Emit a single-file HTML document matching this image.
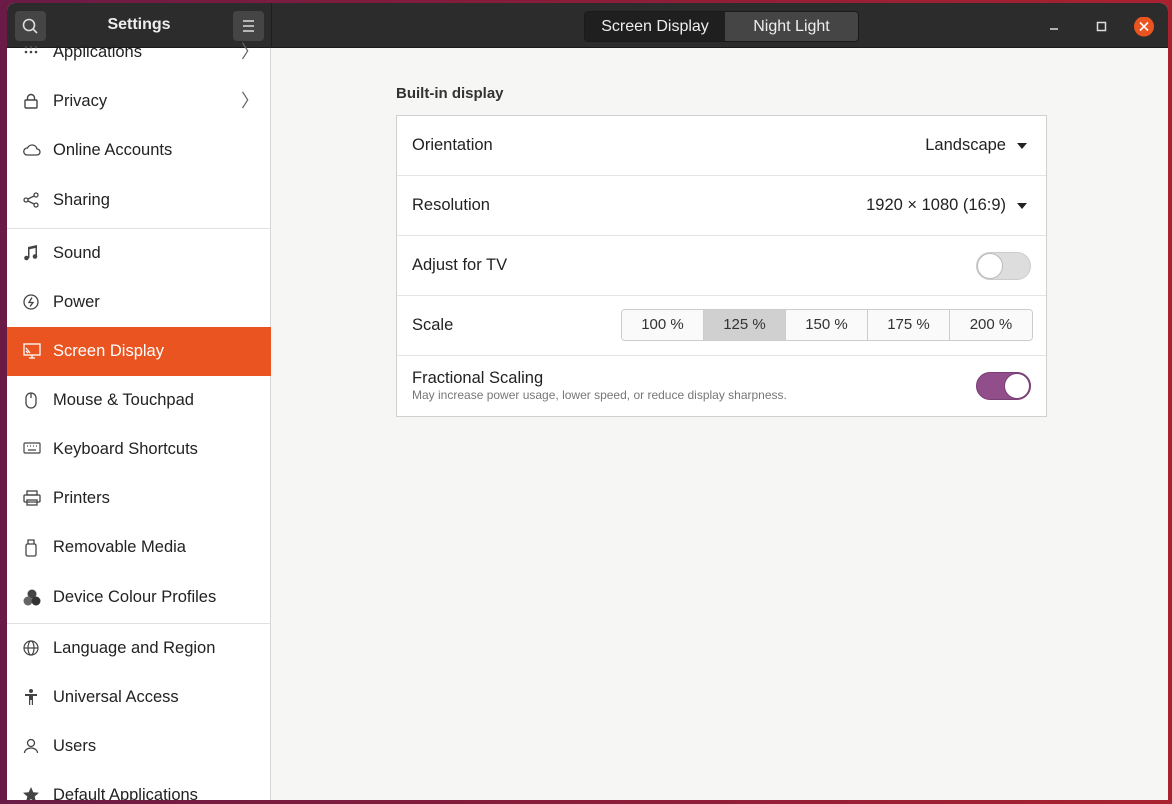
<!DOCTYPE html>
<html><head><style>
*{margin:0;padding:0;box-sizing:border-box}
body{width:1172px;height:804px;overflow:hidden;background:linear-gradient(90deg,#6a1b45,#8a1d3a 50%,#a8222f);font-family:"Liberation Sans",sans-serif;position:relative}
.win{position:absolute;left:7px;top:3px;width:1161px;height:797px;background:#f6f6f5;border-radius:8px 8px 0 0;overflow:hidden}
.hdr{position:absolute;left:0;top:0;width:100%;height:45px;background:#2c2c2c;border-bottom:1px solid #1a1a1a}
.hdr .sep{position:absolute;left:264px;top:0;width:1px;height:45px;background:#1e1e1e}
.btn{position:absolute;top:8px;width:31px;height:30px;background:#454545;border-radius:4px}
.title{position:absolute;left:0;width:264px;top:13px;text-align:center;color:#eee;font-weight:bold;font-size:16px}
.tabs{position:absolute;left:577px;top:8px;height:31px;display:flex;border:1px solid #1a1a1a;border-radius:4px;overflow:hidden}
.tabs div{color:#eee;font-size:16px;line-height:29px;text-align:center}
.side{position:absolute;left:0;top:45px;width:264px;height:752px;background:#fff;border-right:1px solid #d6d6d6}
.it{position:absolute;left:0;width:264px;height:49px;font-size:16.5px;color:#222;line-height:49px;padding-left:46px}
.it svg{position:absolute;left:16px;top:16px}
.it.sel{background:#e95420;color:#fff}
.hr{position:absolute;left:0;width:264px;height:1px;background:#e0e0e0}
.chev{position:absolute;right:12px;top:0;color:#666;font-size:18px}
.h{position:absolute;left:389px;top:82px;font-weight:bold;font-size:15px;color:#333}
.box{position:absolute;left:389px;top:112px;width:651px;height:302px;background:#fff;border:1px solid #d0d0d0}
.row{position:absolute;left:0;width:649px;height:60px;border-bottom:1px solid #e4e4e4;font-size:16.5px;color:#222}
.row .l{position:absolute;left:15px;top:20px}
.row .r{position:absolute;right:40px;top:20px}
.tri{position:absolute;right:19px;top:27px;width:0;height:0;border-left:5px solid transparent;border-right:5px solid transparent;border-top:6px solid #222}
.sw{position:absolute;right:15px;top:16px;width:55px;height:28px;border-radius:14px;background:#ddd;border:1px solid #ccc}
.sw i{position:absolute;top:0;width:26px;height:26px;border-radius:13px;background:#fff;border:1px solid #bbb}
.seg{position:absolute;left:224px;top:13px;display:flex;border:1px solid #ccc;border-radius:4px;overflow:hidden}
.seg div{width:82px;height:30px;line-height:30px;text-align:center;font-size:15px;color:#333;border-right:1px solid #ccc;background:#fafafa}
.seg div:last-child{border-right:0}
</style></head><body>
<div class="win">
<div class="hdr">
<div class="btn" style="left:8px"><svg width="31" height="30"><circle cx="14" cy="14" r="5.5" fill="none" stroke="#ddd" stroke-width="1.6"/><line x1="18" y1="18" x2="22" y2="22" stroke="#ddd" stroke-width="1.6"/></svg></div>
<div class="title">Settings</div>
<div class="btn" style="left:226px"><svg width="31" height="30"><path d="M10 10h11M10 15h11M10 20h11" stroke="#ddd" stroke-width="1.4"/></svg></div>
<div class="sep"></div>
<div class="tabs"><div style="background:#1f1f1f;width:140px">Screen Display</div><div style="background:#454545;width:133px">Night Light</div></div>
<svg style="position:absolute;left:1040px;top:14px" width="110" height="20"><path d="M3 12h8" stroke="#ddd" stroke-width="1.5"/><rect x="50.5" y="5.5" width="8" height="8" fill="none" stroke="#ddd" stroke-width="1.5"/><circle cx="97" cy="9.5" r="10" fill="#e95420"/><path d="M93 5.5l8 8M101 5.5l-8 8" stroke="#fff" stroke-width="1.6"/></svg>
</div>
<div class="side">
<div class="it" style="top:-20px"><svg width="16" height="16" fill="#444"><circle cx="3" cy="3" r="1.3"/><circle cx="8" cy="3" r="1.3"/><circle cx="13" cy="3" r="1.3"/><circle cx="3" cy="8" r="1.3"/><circle cx="8" cy="8" r="1.3"/><circle cx="13" cy="8" r="1.3"/></svg>Applications<span class="chev">〉</span></div>
<div class="it" style="top:29px"><svg width="16" height="16" fill="none" stroke="#444" stroke-width="1.4"><rect x="2" y="7" width="12" height="8" rx="1"/><path d="M4.5 7V5a3.5 3.5 0 0 1 7 0v2"/></svg>Privacy<span class="chev">〉</span></div>
<div class="it" style="top:78px"><svg width="18" height="16" fill="none" stroke="#444" stroke-width="1.3"><path d="M4 13h10a3 3 0 0 0 0-6 5 5 0 0 0-9.5-1A3.5 3.5 0 0 0 4 13z"/></svg>Online Accounts</div>
<div class="it" style="top:128px"><svg width="16" height="16" fill="none" stroke="#444" stroke-width="1.3"><circle cx="3" cy="8" r="2"/><circle cx="13" cy="3" r="2"/><circle cx="13" cy="13" r="2"/><path d="M5 7l6-3M5 9l6 3"/></svg>Sharing</div>
<div class="hr" style="top:180px"></div>
<div class="it" style="top:181px"><svg width="16" height="16" fill="#444"><path d="M5 2l9-2v11h-1.5V3L6.5 4.3V13H5z"/><circle cx="3.5" cy="13" r="2.3"/><circle cx="12" cy="11.5" r="2.3"/></svg>Sound</div>
<div class="it" style="top:230px"><svg width="16" height="16" fill="none" stroke="#444" stroke-width="1.3"><circle cx="8" cy="8" r="7"/><path d="M9 3.5L6 8.5h4L7 12.5" /></svg>Power</div>
<div class="it sel" style="top:279px"><svg width="18" height="16" fill="none" stroke="#fff" stroke-width="1.3"><rect x="1" y="1" width="16" height="11"/><path d="M6 15h6M9 12v3M3 5l4 5M3 8l2 2"/></svg>Screen Display</div>
<div class="it" style="top:328px"><svg width="16" height="18" fill="none" stroke="#444" stroke-width="1.3"><rect x="3" y="1" width="10" height="15" rx="5"/><path d="M8 1v5"/></svg>Mouse &amp; Touchpad</div>
<div class="it" style="top:377px"><svg width="18" height="14" fill="none" stroke="#444" stroke-width="1.2"><rect x="1" y="2" width="16" height="10" rx="1"/><path d="M4 5h1M7 5h1M10 5h1M13 5h1M5 9h8"/></svg>Keyboard Shortcuts</div>
<div class="it" style="top:426px"><svg width="18" height="16" fill="none" stroke="#444" stroke-width="1.3"><rect x="1" y="5" width="16" height="7" rx="1"/><rect x="4" y="1" width="10" height="4"/><rect x="4" y="10" width="10" height="5"/></svg>Printers</div>
<div class="it" style="top:475px"><svg width="16" height="18" fill="none" stroke="#444" stroke-width="1.3"><rect x="3" y="5" width="10" height="12" rx="1.5"/><path d="M5 5V1h6v4"/></svg>Removable Media</div>
<div class="it" style="top:525px"><svg width="18" height="18" fill="#444"><circle cx="9" cy="5" r="4.5" fill="#444"/><circle cx="5" cy="12" r="4.5" fill="#666"/><circle cx="13" cy="12" r="4.5" fill="#333"/></svg>Device Colour Profiles</div>
<div class="hr" style="top:575px"></div>
<div class="it" style="top:576px"><svg width="16" height="16" fill="none" stroke="#444" stroke-width="1.2"><circle cx="8" cy="8" r="7"/><ellipse cx="8" cy="8" rx="3" ry="7"/><path d="M1 8h14"/></svg>Language and Region</div>
<div class="it" style="top:625px"><svg width="16" height="16" fill="#444"><circle cx="8" cy="2" r="2"/><path d="M2 5h12v2H10v9H8.8v-5h-1.6v5H6V7H2z"/></svg>Universal Access</div>
<div class="it" style="top:674px"><svg width="16" height="16" fill="none" stroke="#444" stroke-width="1.3"><circle cx="8" cy="5" r="3.5"/><path d="M1.5 15a6.5 5 0 0 1 13 0"/></svg>Users</div>
<div class="it" style="top:723px"><svg width="16" height="16" fill="#444"><path d="M8 0l2.3 5.2 5.7.5-4.3 3.8 1.3 5.6L8 12.1 3 15.1l1.3-5.6L0 5.7l5.7-.5z"/></svg>Default Applications</div>
</div>
<div class="h">Built-in display</div>
<div class="box">
<div class="row" style="top:0"><span class="l">Orientation</span><span class="r">Landscape</span><i class="tri"></i></div>
<div class="row" style="top:60px"><span class="l">Resolution</span><span class="r">1920 × 1080 (16:9)</span><i class="tri"></i></div>
<div class="row" style="top:120px"><span class="l">Adjust for TV</span><div class="sw"><i style="left:0"></i></div></div>
<div class="row" style="top:180px"><span class="l">Scale</span><div class="seg"><div>100 %</div><div style="background:#d0d0d0">125 %</div><div>150 %</div><div>175 %</div><div>200 %</div></div></div>
<div class="row" style="top:240px;border-bottom:0"><span class="l" style="top:13px">Fractional Scaling</span><span style="position:absolute;left:15px;top:32px;font-size:12px;color:#777">May increase power usage, lower speed, or reduce display sharpness.</span><div class="sw" style="background:#924d8b;border-color:#7a3f74"><i style="left:27px;border-color:#7a3f74"></i></div></div>
</div>
</div>
</body></html>
